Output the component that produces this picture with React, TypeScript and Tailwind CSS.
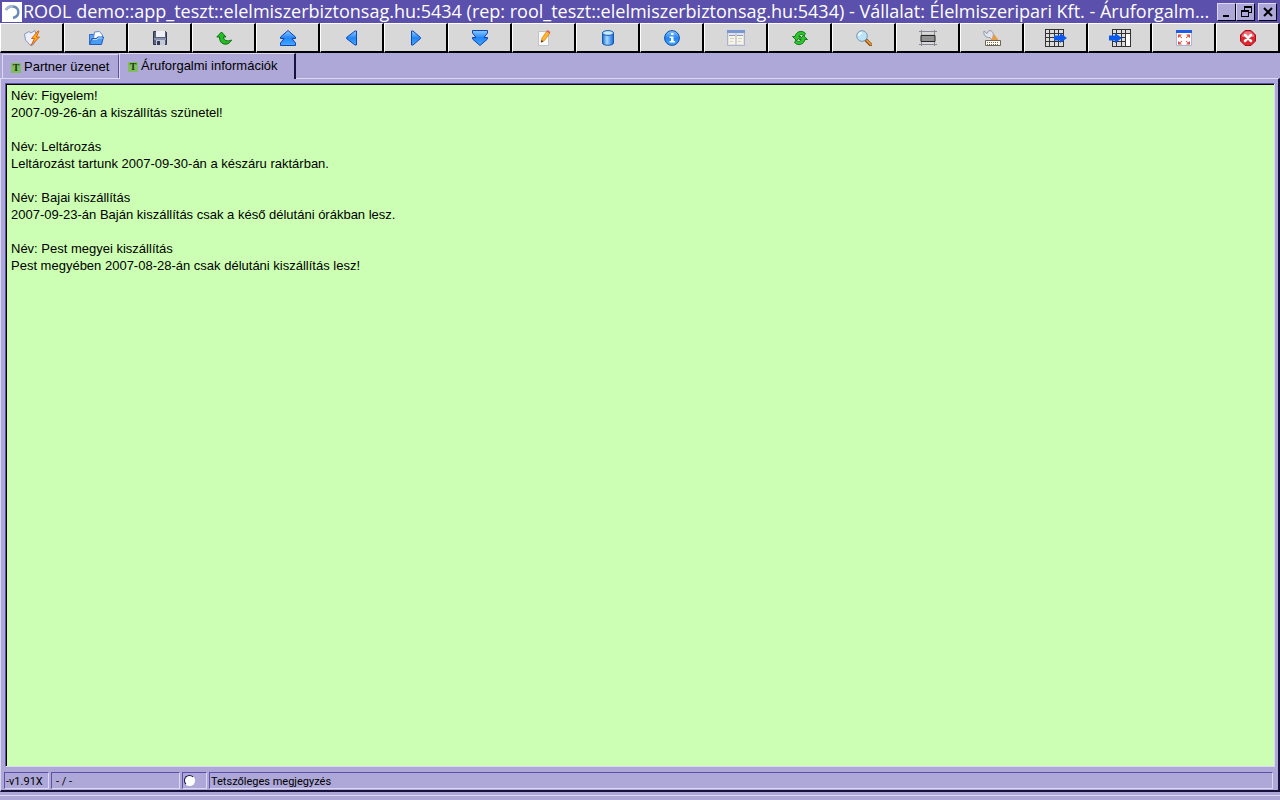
import React, { useState } from 'react'

interface Message {
    name: string,
    text: string
}

const messages: Message[] = [
    { name: 'Figyelem!', text: '2007-09-26-án a kiszállítás szünetel!' },
    { name: 'Leltározás', text: 'Leltározást tartunk 2007-09-30-án a készáru raktárban.' },
    { name: 'Bajai kiszállítás', text: '2007-09-23-án Baján kiszállítás csak a késő délutáni órákban lesz.' },
    { name: 'Pest megyei kiszállítás', text: 'Pest megyében 2007-08-28-án csak délutáni kiszállítás lesz!' },
]

const tabs = ['Partner üzenet', 'Áruforgalmi információk']

// toolbar drawings, 16x16 unless a wider box is given
const tools: { label: string, width?: number, art: React.ReactNode }[] = [
    {
        label: 'Futtatás',
        art: <>
            <path d="M.5 4L5 1.500l2 1.500 4-2.500 2 8-4 6.500H6L1.500 10z" fill="#eceffc" stroke="#8d96b8" />
            <path d="M14 1L7.500 8.500h3L7 15.500 15.500 7h-3L15 1z" fill="#ffae1a" stroke="#d9590c" strokeWidth=".9" />
        </>
    },
    {
        label: 'Megnyitás',
        art: <>
            <path d="M1.500 14V4.500h4l1 1.500h2v8z" fill="#5e9df0" stroke="#2c6fd0" />
            <path d="M5.500 9l1-7 5-.5L14.500 5v4z" fill="#fff" stroke="#5b8fd8" />
            <path d="M1.500 14.500L4 8.500h4.500l1-1.500h6l-2 7.500z" fill="#4c9bf2" stroke="#1d5cc0" />
            <path d="M5 9.500h4l1-1.500h4.500" fill="none" stroke="#b6dbff" />
        </>
    },
    {
        label: 'Mentés',
        art: <>
            <path d="M1.500 1.500h12l1 1v12h-13z" fill="#59627d" stroke="#30364e" />
            <path d="M4 1h9v6H4z" fill="#eef0f6" />
            <path d="M2 8h12v2H2z" fill="#8992b0" />
            <path d="M4 10h9v5H4z" fill="#c5cad9" />
            <path d="M5 11h3v4H5z" fill="#343b55" />
        </>
    },
    {
        label: 'Visszavonás',
        art: <path d="M.8 7L5.500 2 10 7H7.500c.2 3.500 3.500 5 8 3-2 4-5 4.500-7.500 4-3-.6-4.500-3-4.500-7z" fill="#25bd24" stroke="#087010" />
    },
    {
        label: 'Első',
        art: <path d="M8 .5L15.500 7v1.500H12l3.500 4.500v2.500H.5V13L4 8.500H.5V7z" fill="url(#blue)" stroke="#0c46b4" />
    },
    { label: 'Előző', art: <path d="M12.500 1v14H11L2.500 8.500v-1L11 1z" fill="url(#blue)" stroke="#0c46b4" /> },
    { label: 'Következő', art: <path d="M3.500 1v14H5l7.500-6.500v-1L5 1z" fill="url(#blue)" stroke="#0c46b4" /> },
    {
        label: 'Utolsó',
        art: <path d="M8 15.500L15.500 9V7.500H12L15.500 3V.5H.5V3L4 7.500H.5V9z" fill="url(#blue)" stroke="#0c46b4" />
    },
    {
        label: 'Szerkesztés',
        art: <>
            <path d="M2.500 1.500h10v14h-10z" fill="#fafafa" stroke="#c1c1cc" />
            <path d="M5 12l1-4 5-7 3 2-5.500 7.500z" fill="#ffb52e" stroke="#d17a11" strokeWidth=".7" />
            <path d="M11.500 0l3 2-1 1.500-3-2z" fill="#df6054" />
            <path d="M5 12.500l.5-2.500L7.500 11.500z" fill="#333" />
        </>
    },
    {
        label: 'Adatbázis',
        art: <>
            <path d="M2.500 3v10c0 3 11 3 11 0V3z" fill="url(#drum)" stroke="#1259b8" />
            <ellipse cx="8" cy="3" rx="5.500" ry="2.400" fill="#c6eaff" stroke="#1259b8" />
        </>
    },
    {
        label: 'Információ',
        art: <>
            <circle cx="8" cy="8" r="7.400" fill="url(#blue)" stroke="#0d4daa" />
            <path d="M7 3h2.500v2H7zM5.500 6.500h4V11H11v1.500H5.500V11H7V8H5.500z" fill="#fff" />
        </>
    },
    {
        label: 'Ablakok',
        width: 18,
        art: <>
            <path d="M.5.500h17v15H.5z" fill="#e2e2e2" stroke="#a9b2cb" />
            <path d="M0 0h18v3H0z" fill="#7797d5" />
            <path d="M2 5h6v9H2zM10 5h6v9h-6z" fill="#f7f4e9" />
            <path d="M2 5.500h6M10 5.500h6" stroke="#8d9dbd" />
            <path d="M3 8.500h4M3 11.500h3M11 8.500h4M11 11.500h3" stroke="#d5cdb4" />
            <path d="M9 3v12" stroke="#b8bfd0" />
        </>
    },
    {
        label: 'Frissítés',
        art: <>
            <path d="M.5 6.500H3C4 1.500 10-.5 13.500 3.500L12 6C9.500 3.500 7.500 4.500 7 6.500h2l-4.500 4z" fill="#2cc52b" stroke="#08740e" strokeWidth=".9" />
            <path d="M15.500 9.500H13c-1 5-7 7-10.500 3L4 10c2.500 2.500 4.500 1.500 5-.5H7l4.500-4z" fill="#2cc52b" stroke="#08740e" strokeWidth=".9" />
        </>
    },
    {
        label: 'Keresés',
        art: <>
            <path d="M10 10l5 5" stroke="#8d5114" strokeWidth="3.500" strokeLinecap="round" />
            <path d="M11 10.500l4 4" stroke="#f3a33b" strokeWidth="1.500" strokeLinecap="round" />
            <circle cx="6" cy="6" r="5.300" fill="#b9e4fa" stroke="#7d97b3" />
            <path d="M3 6c0-2 1-3 3-3" fill="none" stroke="#fff" strokeWidth="1.500" />
        </>
    },
    {
        label: 'Keret',
        width: 20,
        art: <>
            <path d="M1 1.500h18M1 14.500h18M3.500 0v16M16.500 0v16" stroke="#888896" />
            <path d="M3 5.500h14v6H3z" fill="#929292" stroke="#252525" />
            <path d="M4 4.500h12" stroke="#c6c6ca" />
        </>
    },
    {
        label: 'Beállítások',
        width: 20,
        art: <>
            <path d="M2 1l3 2.500L7 .5c3.500 0 5 3 4 6l3 3-3 2-3-4C4 8 1 5 2 1z" fill="#dfe4ee" stroke="#9298a9" />
            <path d="M12 4l4.500 6H9z" fill="#e79b45" />
            <path d="M3.500 10.500h15v5h-15z" fill="#fffdf2" stroke="#6c6558" />
            <path d="M5 12.500h12M5 14.500h12" stroke="#6c6558" strokeDasharray="1 1" />
        </>
    },
    {
        label: 'Exportálás',
        width: 24,
        art: <>
            <path d="M1.500 0v17h18V0z" fill="#dedede" />
            <path d="M1 .5h19M1 4.500h19M1 8.500h19M1 12.500h19M1 17.500h19M1.500 0v18M5.500 0v18M10.500 0v18M14.500 0v18M19.500 0v18" stroke="#333" />
            <path d="M10 6.500h6V4l7 5-7 5v-2.500h-6z" fill="#0a5af0" />
        </>
    },
    {
        label: 'Importálás',
        width: 24,
        art: <>
            <path d="M4.500 0v17h18V0z" fill="#dedede" />
            <path d="M17 5h5v12h-5z" fill="#fff" />
            <path d="M4 .5h19M4 4.500h19M4 8.500h14M4 12.500h14M4 17.500h19M4.500 0v18M8.500 0v18M13.500 0v18M17.500 0v18M22.500 0v18" stroke="#333" />
            <path d="M1 6.500h6V4l7 5-7 5v-2.500H1z" fill="#0a5af0" />
        </>
    },
    {
        label: 'Teljes képernyő',
        art: <>
            <path d="M.5.500h15v15H.5z" fill="#fff" stroke="#a9b6db" />
            <path d="M0 0h16v3H0z" fill="#1c5fe0" />
            <path d="M2 4.500h4L2 8zM14 4.500h-4L14 8zM2 14.500h4L2 11zM14 14.500h-4l4-3.500z" fill="#e6463c" />
            <path d="M3 5.500l3 2.500M13 5.500L10 8M3 13.500l3-2.500M13 13.500L10 11" stroke="#e6463c" />
        </>
    },
    {
        label: 'Kilépés',
        art: <>
            <path d="M5 .5h6L15.500 5v6L11 15.500H5L.5 11V5z" fill="#e02530" stroke="#a80f1b" />
            <path d="M2 5l3.500-3.500h5L14 5v2H2z" fill="#f2717a" />
            <path d="M5 5l6 6M11 5l-6 6" stroke="#fff" strokeWidth="2.500" strokeLinecap="round" />
        </>
    },
]

const windowButtons = [
    { label: 'Kis méret', art: <path d="M3 10h6v2H3z" /> },
    { label: 'Előző méret', art: <path d="M5 1h8v7h-3V7h2V3H6v2H5zM2 5h8v7H2zm1 2v4h6V7z" fillRule="evenodd" /> },
    { label: 'Bezárás', art: <path d="M3 3l8 8M11 3l-8 8" stroke="#000" strokeWidth="2" /> },
]

const TabIcon = () => (
    <span aria-hidden="true" className="mt-[2px] flex size-[10px] items-center justify-center bg-[#83bd62] font-['Liberation_Serif',serif] text-[10px] leading-[10px] font-bold text-[#173b10]">T</span>
)

const TitleBar = () => (
    <header className="flex h-[23px] shrink-0 items-center bg-[#5b50ab] pl-[2px] pr-[3px]">
        <svg viewBox="0 0 20 20" className="size-5 shrink-0 bg-white">
            <path d="M4 8c2-4.500 10-5 12 0 1 4-1 7-5 8" fill="none" stroke="#6b8ab4" strokeWidth="2.500" />
            <path d="M4 8c1-3 4-4 7-3" fill="none" stroke="#a8bad2" strokeWidth="2.500" />
        </svg>
        <h1 className="min-w-0 flex-1 overflow-x-clip pl-px font-['Open_Sans',sans-serif] text-[18px] leading-[23px] whitespace-nowrap text-white">
            ROOL demo::app_teszt::elelmiszerbiztonsag.hu:5434 (rep: rool_teszt::elelmiszerbiztonsag.hu:5434) - Vállalat: Élelmiszeripari Kft. - Áruforgalm...
        </h1>
        <div className="flex shrink-0">
            {windowButtons.map((button, index) => (
                <button key={button.label} aria-label={button.label}
                    className={`flex h-[18px] w-[19px] items-center justify-center border border-t-[#dcd8f2] border-l-[#dcd8f2] border-r-black border-b-black bg-[#aea8d8] ${index === 2 ? 'ml-[3px]' : ''}`}>
                    <svg viewBox="0 0 14 14" className="size-[14px]">{button.art}</svg>
                </button>
            ))}
        </div>
    </header>
)

const Toolbar = () => (
    <div role="toolbar" className="flex h-[30px] shrink-0">
        {tools.map((tool) => (
            <button key={tool.label} aria-label={tool.label}
                className="flex flex-1 items-center justify-center border-t border-l border-r-2 border-b-2 border-t-white border-l-white border-r-black border-b-black bg-[#d8d8d8]">
                <svg viewBox={`0 0 ${tool.width ?? 16} ${tool.width === 24 ? 18 : 16}`} width={tool.width ?? 16} height={tool.width === 24 ? 18 : 16}>
                    {tool.art}
                </svg>
            </button>
        ))}
    </div>
)

const StatusBar = () => {
    const field = 'flex h-[17px] items-center border border-t-[#5b50ab] border-l-[#5b50ab] border-r-[#dcd8f2] border-b-[#dcd8f2]'
    return (
        <footer className="flex shrink-0 gap-[2px] pt-[5px] pr-[5px] pb-px pl-[3px] font-['Roboto',sans-serif] text-[11px] leading-[15px]">
            <div className={`${field} w-[45px] pt-[2px] pl-px`}>-v1.91X</div>
            <div className={`${field} w-[129px] pt-[2px] pl-1`}>- / -</div>
            <div className={`${field} w-[25px] pl-px`}>
                <input type="radio" aria-label="Állapot" className="size-[11px] appearance-none rounded-full border border-t-[#16123c] border-l-[#16123c] border-r-white border-b-white bg-white" />
            </div>
            <div className={`${field} min-w-0 flex-1 pt-[2px] pl-px`}>Tetszőleges megjegyzés</div>
        </footer>
    )
}

const App = () => {
    const [active, setActive] = useState(1)
    const content = messages.map((message) => `Név: ${message.name}\n${message.text}`).join('\n\n')

    return (
        <div className="flex h-screen flex-col overflow-hidden bg-[#aea8d8] font-['Liberation_Sans',Arial,sans-serif] text-[13px] text-black">
            {/* shared gradients of the toolbar icons */}
            <svg aria-hidden="true" className="absolute size-0">
                <defs>
                    <linearGradient id="blue" x1="0" y1="0" x2="0" y2="1">
                        <stop offset="0" stopColor="#8acbff" />
                        <stop offset=".5" stopColor="#2385f5" />
                        <stop offset="1" stopColor="#45a9ff" />
                    </linearGradient>
                    <linearGradient id="drum">
                        <stop offset="0" stopColor="#1767d8" />
                        <stop offset=".4" stopColor="#a6dcff" />
                        <stop offset="1" stopColor="#1767d8" />
                    </linearGradient>
                </defs>
            </svg>
            <TitleBar />
            <Toolbar />
            <div role="tablist" className="flex h-[25px] shrink-0 items-end pl-[2px]">
                {tabs.map((tab, index) => (
                    <button key={tab} role="tab" aria-selected={active === index} onClick={() => setActive(index)}
                        className={`flex items-center gap-[3px] border-t border-l border-t-[#dcd8f2] border-l-[#dcd8f2] pl-2 ${active === index ? 'relative -mb-px h-[26px] w-[177px] border-r-2 border-r-[#16123c] bg-[#aea8d8] pb-[2px]' : 'h-6 w-[117px] border-r border-r-[#5b50ab]'}`}>
                        <TabIcon />
                        {tab}
                    </button>
                ))}
            </div>
            <main className="flex min-h-0 flex-1 flex-col border-t border-r-2 border-b-2 border-l border-t-[#dcd8f2] border-r-[#16123c] border-b-[#16123c] border-l-[#dcd8f2]">
                <div className="flex min-h-0 flex-1 pt-1 pr-[3px] pl-1">
                    <div className="flex flex-1 border border-t-[#5b50ab] border-l-[#5b50ab] border-r-[#dcd8f2] border-b-[#dcd8f2]">
                        <textarea readOnly aria-label={tabs[active]} value={active === 1 ? content : ''}
                            className="flex-1 resize-none border-t border-l border-black bg-[#ccffb3] px-1 py-[2px] leading-[17px] outline-none" />
                    </div>
                </div>
                <StatusBar />
            </main>
            <div className="mt-[3px] h-[5px] shrink-0 border-t border-t-[#dcd8f2]" />
        </div>
    )
}

export default App
